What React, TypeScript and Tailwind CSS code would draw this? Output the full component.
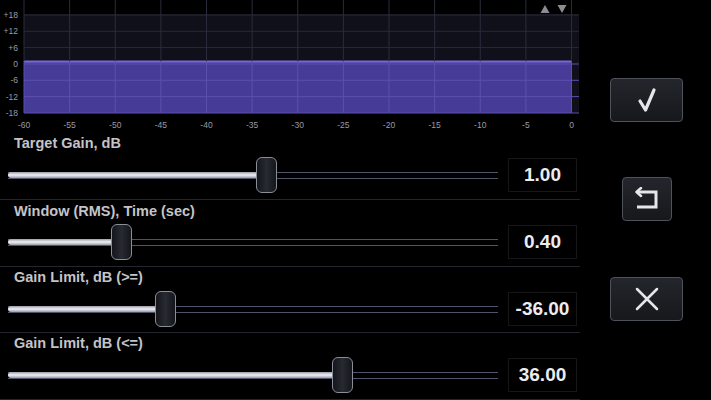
import React from "react";

const font = { fontFamily: '"Liberation Sans", Arial, sans-serif' };

function Chart() {
  const x0 = 24;
  const x1 = 571.5;
  const xs = Array.from({ length: 13 }, (_, i) => x0 + ((x1 - x0) * i) / 12);
  const xLabels = ["-60", "-55", "-50", "-45", "-40", "-35", "-30", "-25", "-20", "-15", "-10", "-5", "0"];
  const ys = [15, 31.3, 47.6, 64, 80.3, 96.6, 113];
  const yLabels = ["+18", "+12", "+6", "0", "-6", "-12", "-18"];
  return (
    <svg width="580" height="133" viewBox="0 0 580 133" className="block">
      <rect x={x0} y={14} width={579 - x0} height={99} fill="#0f1019" />
      <rect x={x0} y={61} width={x1 - x0} height={52} fill="#473b98" />
      <rect x={x0} y={60.5} width={x1 - x0} height={2} fill="#7868d6" />
      {ys.map((y, i) => (
        <line key={"h" + i} x1={x0} x2={579} y1={y} y2={y} stroke={y > 62 ? "#5b50b0" : "#282a3a"} strokeWidth="1" />
      ))}
      {xs.map((x, i) => (
        <g key={"v" + i}>
          <line x1={x} x2={x} y1={0} y2={61} stroke="#2a2c3c" strokeWidth="1" />
          <line x1={x} x2={x} y1={61} y2={113} stroke="#5b50b0" strokeWidth="1" />
        </g>
      ))}
      {yLabels.map((t, i) => (
        <text key={"yl" + i} x={18} y={ys[i] + 3} textAnchor="end" fontSize="8.5" fill="#9a9aa2" style={font}>
          {t}
        </text>
      ))}
      {xLabels.map((t, i) => (
        <text key={"xl" + i} x={xs[i]} y={128} textAnchor="middle" fontSize="8.5" fill="#9a9aa2" style={font}>
          {t}
        </text>
      ))}
      <polygon points="540.5,13 549.5,13 545,5" fill="#8c8c92" />
      <polygon points="557.5,5 566.5,5 562,13" fill="#8c8c92" />
    </svg>
  );
}

type RowProps = {
  label: string;
  value: string;
  thumb: number; // thumb center x in page px
  h: string;
  labelPad: string;
};

function SliderRow({ label, value, thumb, h, labelPad }: RowProps) {
  const trackLeft = 8;
  const fill = thumb - trackLeft;
  return (
    <div className={`${h} border-b border-[#23252f] flex flex-col`}>
      <div className={`${labelPad} pl-[14px] h-[16px] text-[14.5px] leading-[16px] font-bold text-[#c4c4c8]`} style={font}>
        {label}
      </div>
      <div className="mt-[8px] h-[36px] flex items-center">
        <div className="ml-[8px] w-[490px] h-[7px] relative border-y-[1.5px] border-[#50546a]">
          <div
            className="absolute left-0 -top-[1px] h-[6px] rounded-l-[3px] bg-gradient-to-b from-[#9a9ca8] via-[#f2f2f6] to-[#9a9ca8]"
            style={{ width: fill }}
          />
          <div
            className="absolute top-1/2 -translate-y-1/2 w-[21px] h-[36px] rounded-[6px] border-[1.5px] border-[#8a8e98] bg-gradient-to-r from-[#14161b] via-[#272a31] to-[#14161b]"
            style={{ left: fill - 10.5 }}
          />
        </div>
        <div
          className="ml-[10px] w-[69px] h-[34px] border border-[#161618] flex items-center justify-center text-[19px] font-bold text-[#ececf0]"
          style={font}
        >
          {value}
        </div>
      </div>
    </div>
  );
}

function Btn({ w, children }: { w: string; children: React.ReactNode }) {
  return (
    <div
      className={`${w} h-[44px] rounded-[4px] border border-[#4e525a] bg-gradient-to-b from-[#23262c] to-[#16181c] flex items-center justify-center`}
    >
      {children}
    </div>
  );
}

export default function App() {
  return (
    <div className="w-[711px] h-[400px] bg-black overflow-hidden flex" style={font}>
      <div className="w-[580px] flex flex-col">
        <Chart />
        <SliderRow label="Target Gain, dB" value="1.00" thumb={266} h="h-[67px] shrink-0" labelPad="pt-[2px]" />
        <SliderRow label="Window (RMS), Time (sec)" value="0.40" thumb={121} h="h-[67px] shrink-0" labelPad="pt-[3px]" />
        <SliderRow label="Gain Limit, dB (>=)" value="-36.00" thumb={165} h="h-[66px] shrink-0" labelPad="pt-[2px]" />
        <SliderRow label="Gain Limit, dB (<=)" value="36.00" thumb={342} h="h-[67px] shrink-0" labelPad="pt-[2px]" />
      </div>
      <div className="flex-1 flex flex-col items-center pt-[78px] pl-[2px]">
        <Btn w="w-[73px]">
          <svg width="24" height="26" viewBox="0 0 24 26">
            <path d="M5 14 L10.5 23 L19 3" fill="none" stroke="#e6e6ea" strokeWidth="3.2" strokeLinecap="round" strokeLinejoin="round" />
          </svg>
        </Btn>
        <div className="mt-[55px]">
          <Btn w="w-[50px]">
            <svg width="30" height="24" viewBox="0 0 30 24">
              <path d="M5 5 H24 V20 H5" fill="none" stroke="#e6e6ea" strokeWidth="3" strokeLinejoin="miter" />
              <path d="M9 1 L4.5 5 L9 9" fill="none" stroke="#e6e6ea" strokeWidth="2.5" strokeLinecap="round" strokeLinejoin="round" />
            </svg>
          </Btn>
        </div>
        <div className="mt-[56px]">
          <Btn w="w-[73px]">
            <svg width="26" height="26" viewBox="0 0 26 26">
              <path d="M3 3 L23 23 M23 3 L3 23" fill="none" stroke="#e6e6ea" strokeWidth="2.5" strokeLinecap="round" />
            </svg>
          </Btn>
        </div>
      </div>
    </div>
  );
}
